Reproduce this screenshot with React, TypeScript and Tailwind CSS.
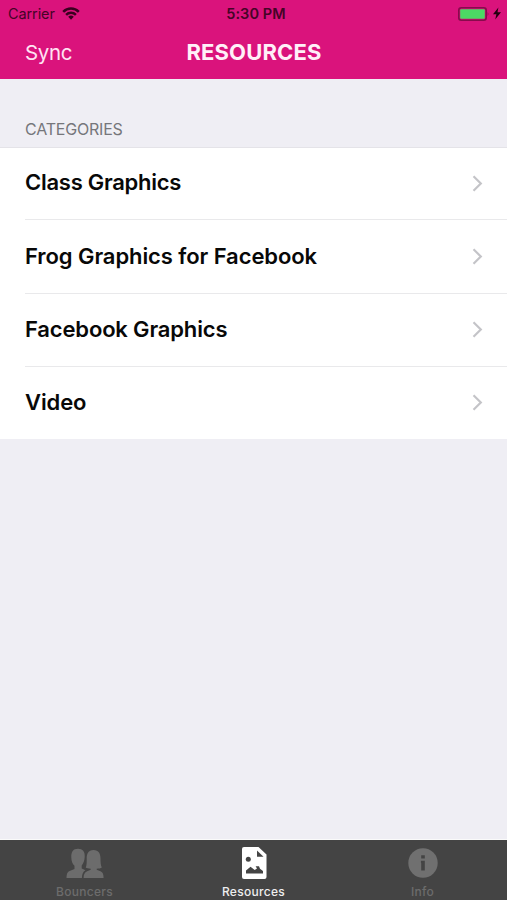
import React from "react";

const rows = [
  { title: "Class Graphics", cls: "h-[72px]", text: "pb-[2px] tracking-[-0.26px]" },
  { title: "Frog Graphics for Facebook", cls: "h-[74px]", text: "tracking-[-0.08px]" },
  { title: "Facebook Graphics", cls: "h-[73px]", text: "pb-[2px] tracking-[-0.16px]" },
  { title: "Video", cls: "h-[72px]", text: "pb-[2px] tracking-[-0.1px]" },
];

function StatusBar() {
  return (
    <div className="grid h-[27px] grid-cols-3 items-center px-2 font-['Inter',sans-serif] text-[14.5px] leading-[27px] text-[#450427]">
      <div className="flex items-center gap-[7px]">
        <span className="tracking-[-0.1px]">Carrier</span>
        <svg width="18" height="13" viewBox="0 0 18 13" fill="none" stroke="#39001f" strokeWidth="2.5">
          <path d="M1.2 4.8a11 11 0 0 1 15.6 0" />
          <path d="M4.1 7.8a7 7 0 0 1 9.8 0" />
          <path d="M6.2 9.8a4 4 0 0 1 5.6 0L9 12.7Z" fill="#39001f" stroke="none" />
        </svg>
      </div>
      <div className="pl-[5px] text-center font-semibold tracking-[0.1px]">5:30 PM</div>
      <div className="-mr-[2px] flex items-center justify-end gap-[3px]">
        <svg width="32" height="14" viewBox="0 0 32 14">
          <rect x="0.8" y="0.8" width="27.4" height="12.4" rx="2.5" fill="none" stroke="#870b4c" strokeWidth="1.6" />
          <rect x="2.2" y="2.2" width="24.6" height="9.6" rx="1" fill="#4cd964" />
          <path d="M29.6 4.8q1.8 2.2 0 4.4Z" fill="#870b4c" />
        </svg>
        <svg width="8" height="13" viewBox="0 0 8 13">
          <path d="M5.4.5 0 7.3h3.4L2.2 12.5 8 5.3H4.5Z" fill="#24000f" />
        </svg>
      </div>
    </div>
  );
}

function PeopleIcon() {
  return (
    <svg width="38" height="32" viewBox="0 0 38 32" fill="#6c6c6c">
      <path d="M12 .8c4.7 0 7 2.8 6.7 8-.1 3.8-1.3 6.8-3 8.7v3l3.7 1.8c-2.5 1.6-3.3 3.6-3.5 7.7H.5c.2-4.2.8-6.2 4.3-7.4l3.7-1.7v-3.2C6.4 15.8 5.4 13 5.3 9.2 5.1 4.2 7 .8 12 .8Z" />
      <path d="M27.4 2c5.4 0 7.1 4 7.1 8.5 0 4 .2 6.7 1.3 9-1 .8-2.9 1.2-5.1 1.2v1.1l3.8 1.5c2.4 1 3 2.8 3.1 6.7h-20c.1-3.7.9-5.7 3.6-6.8l3.5-1.4v-1.1c-2.2 0-4-.5-5-1.2 1.2-2.4 1-5 1-9C20.7 6 22.3 2 27.4 2Z" />
    </svg>
  );
}

function ResourceIcon() {
  return (
    <svg width="26" height="34" viewBox="0 0 26 34">
      <path fill="#fff" d="M3 1h14.5L25.5 8.5V31q0 2-2 2H3q-2 0-2-2V3q0-2 2-2Z" />
      <path d="M16 4.5v6.3h6.500Z" fill="#444" />
      <circle cx="7.3" cy="13.3" r="2.5" fill="#444" />
      <path d="M5 27.5v-3l4.500-3.800 4.200 3.300 2.300-1.500-1.400-2.200h3.400l1 2.400 3 2.300v2.500Z" fill="#444" />
    </svg>
  );
}

function InfoIcon() {
  return (
    <svg width="30" height="30" viewBox="0 0 30 30">
      <circle cx="15" cy="15" r="14.7" fill="#707070" />
      <path d="M13.2 7.3h3.6v3.2h-3.6ZM12.9 12.8h3.9V22.5h-3.6v-7.7h-.3Z" fill="#444" />
    </svg>
  );
}

export default function App() {
  return (
    <div className="flex h-[900px] w-[507px] flex-col overflow-hidden bg-[#efeef4]">
      <header className="h-[79px] shrink-0 bg-[#da137c]">
        <StatusBar />
        <div className="grid h-[50px] grid-cols-3 items-center pl-[25px] pr-[24px]">
          <span className="pt-px font-['Inter',sans-serif] text-[20.5px] leading-[50px] tracking-[-0.35px] text-[#ffe3f3]">Sync</span>
          <h1 className="pb-[2px] text-center font-['Inter',sans-serif] text-[22px] font-bold leading-[48px] tracking-[0.15px] text-[#fff0f8]">RESOURCES</h1>
        </div>
      </header>
      <main className="flex-1">
        <h2 className="flex h-[69px] items-end border-b border-[#e4e3e8] pb-[8px] pl-[25px] font-['Inter',sans-serif] text-[16px] leading-[20px] tracking-[-0.2px] text-[#76767b]">CATEGORIES</h2>
        <ul className="bg-white">
          {rows.map((r, i) => (
            <li key={r.title} className={`flex pl-[25px] ${r.cls}`}>
              <div className={`flex flex-1 items-center justify-between pb-px pr-[24px] ${i < 3 ? "border-b border-[#e9e9eb]" : ""}`}>
                <span className={`font-['Inter',sans-serif] text-[22px] font-semibold leading-[28px] text-[#080808] ${r.text}`}>{r.title}</span>
                <svg width="11" height="17" viewBox="0 0 11 17" fill="none" stroke="#c4c4c8" strokeWidth="2.2">
                  <path d="m1.5 1.3 7.3 7.2-7.3 7.2" />
                </svg>
              </div>
            </li>
          ))}
        </ul>
      </main>
      <nav className="grid h-[61px] shrink-0 grid-cols-3 border-t border-[#fafafa] bg-[#444] font-['Inter',sans-serif] text-[12px] font-medium leading-[14px] tracking-[0.3px]">
        <div className="flex flex-col items-center justify-between pb-px pt-[8px] text-[#6c6c6c]"><PeopleIcon /><span>Bouncers</span></div>
        <div className="flex flex-col items-center justify-between pb-px pt-[6px] text-[#eee]"><ResourceIcon /><span>Resources</span></div>
        <div className="flex flex-col items-center justify-between pb-px pt-[8px] text-[#6c6c6c]"><InfoIcon /><span>Info</span></div>
      </nav>
    </div>
  );
}
